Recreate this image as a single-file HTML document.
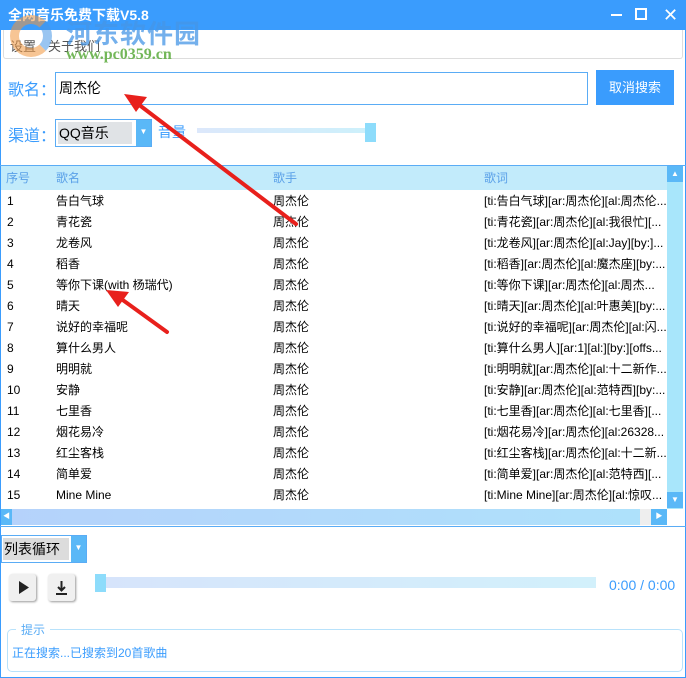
<!DOCTYPE html>
<html><head><meta charset="utf-8"><style>
*{margin:0;padding:0;box-sizing:border-box}
body{width:686px;height:678px;overflow:hidden;background:#fff;font-family:"Liberation Sans","Noto Sans CJK SC",sans-serif;position:relative;font-size:12px;color:#000}
.abs{position:absolute}
.frame{left:0;top:0;width:686px;height:678px;border:1px solid #3a9cfd}
.title{left:0;top:0;width:686px;height:30px;background:#3a9cfd;color:#fff;font-weight:bold;font-size:14px;line-height:30px;padding-left:8px}
.row{left:1px;width:666px;height:21px;line-height:21px;font-size:12px}
.row span{position:absolute;white-space:nowrap}
.c1{left:6px}.c2{left:55px}.c3{left:272px}.c4{left:483px}
</style></head><body>
<div class="abs frame"></div>
<div class="abs title">全网音乐免费下载V5.8</div>
<div class="abs" style="left:611px;top:14px;width:11px;height:2px;background:#fff"></div>
<div class="abs" style="left:635px;top:8px;width:12px;height:12px;border:2px solid #fff"></div>
<div class="abs" style="left:663px;top:4px;color:#fff;font-size:18px;line-height:22px">✕</div>
<div class="abs" style="left:3px;top:30px;width:680px;height:29px;border:1px solid #ddd;border-top:none;border-radius:0 0 3px 3px"></div>
<div class="abs" style="left:10px;top:36px;font-size:13px;color:#555">设置</div>
<div class="abs" style="left:48px;top:36px;font-size:13px;color:#555">关于我们</div>
<!-- watermark -->
<div class="abs" style="left:10px;top:15px;width:42px;height:42px;border-radius:50%;border:9px solid rgba(240,150,60,.55);border-right-color:rgba(70,150,230,.55)"></div>
<div class="abs" style="left:66px;top:14px;font-size:26px;font-weight:bold;color:rgba(70,150,230,.75);letter-spacing:1px">河东软件园</div>
<div class="abs" style="left:66px;top:46px;font-size:16px;font-weight:bold;color:rgba(90,170,60,.85);font-family:'Liberation Serif',serif">www.pc0359.cn</div>

<div class="abs" style="left:8px;top:76px;font-size:16px;color:#3a9cfd">歌名：</div>
<div class="abs" style="left:55px;top:72px;width:533px;height:33px;border:1px solid #5aacf5;padding-left:3px;line-height:31px;font-size:14px">周杰伦</div>
<div class="abs" style="left:596px;top:70px;width:78px;height:35px;background:#3a9cfd;color:#fff;font-size:13px;line-height:35px;text-align:center">取消搜索</div>

<div class="abs" style="left:8px;top:122px;font-size:16px;color:#3a9cfd">渠道：</div>
<div class="abs" style="left:55px;top:119px;width:97px;height:28px;border:1px solid #5aacf5"></div>
<div class="abs" style="left:58px;top:122px;width:74px;height:22px;background:#e0e3e6;font-size:14px;line-height:22px;padding-left:1px">QQ音乐</div>
<div class="abs" style="left:136px;top:120px;width:15px;height:26px;background:#5ab8f7;color:#fff;font-size:8px;text-align:center;line-height:24px">▼</div>
<div class="abs" style="left:158px;top:122px;font-size:14px;color:#3a9cfd">音量</div>
<div class="abs" style="left:197px;top:128px;width:170px;height:5px;background:linear-gradient(90deg,#dce8fb,#cdf0fb)"></div>
<div class="abs" style="left:365px;top:123px;width:11px;height:19px;background:#8ddcfb"></div>

<div class="abs" style="left:0;top:165px;width:686px;height:362px;border:1px solid #5aacf5;border-left:none;border-right:none"></div>
<div class="abs" style="left:1px;top:166px;width:666px;height:24px;background:#c2ebfb;color:#5aa0e8;font-size:12px;line-height:24px">
<span class="abs" style="left:5px">序号</span><span class="abs" style="left:55px">歌名</span><span class="abs" style="left:272px">歌手</span><span class="abs" style="left:483px">歌词</span></div>
<div class="abs" style="left:667px;top:166px;width:16px;height:343px;background:#a8e6fb"></div>
<div class="abs" style="left:667px;top:166px;width:16px;height:16px;background:#5ab8f7;color:#fff;font-size:8px;text-align:center;line-height:16px">▲</div>
<div class="abs" style="left:667px;top:492px;width:16px;height:16px;background:#5ab8f7;color:#fff;font-size:8px;text-align:center;line-height:16px">▼</div>
<div class="abs" style="left:1px;top:509px;width:666px;height:16px;background:linear-gradient(90deg,#b5d2fb,#aee2fb)"></div>
<div class="abs" style="left:1px;top:509px;width:11px;height:16px;background:#5ab8f7;color:#fff;font-size:7px;line-height:16px;text-align:center">◀</div>
<div class="abs" style="left:640px;top:509px;width:11px;height:16px;background:#eee"></div>
<div class="abs" style="left:651px;top:509px;width:16px;height:16px;background:#5ab8f7;color:#fff;font-size:7px;line-height:16px;text-align:center">▶</div>

<div class="abs row" style="top:191px"><span class="c1">1</span><span class="c2">告白气球</span><span class="c3">周杰伦</span><span class="c4">[ti:告白气球][ar:周杰伦][al:周杰伦...</span></div>
<div class="abs row" style="top:212px"><span class="c1">2</span><span class="c2">青花瓷</span><span class="c3">周杰伦</span><span class="c4">[ti:青花瓷][ar:周杰伦][al:我很忙][...</span></div>
<div class="abs row" style="top:233px"><span class="c1">3</span><span class="c2">龙卷风</span><span class="c3">周杰伦</span><span class="c4">[ti:龙卷风][ar:周杰伦][al:Jay][by:]...</span></div>
<div class="abs row" style="top:254px"><span class="c1">4</span><span class="c2">稻香</span><span class="c3">周杰伦</span><span class="c4">[ti:稻香][ar:周杰伦][al:魔杰座][by:...</span></div>
<div class="abs row" style="top:275px"><span class="c1">5</span><span class="c2">等你下课(with 杨瑞代)</span><span class="c3">周杰伦</span><span class="c4">[ti:等你下课][ar:周杰伦][al:周杰...</span></div>
<div class="abs row" style="top:296px"><span class="c1">6</span><span class="c2">晴天</span><span class="c3">周杰伦</span><span class="c4">[ti:晴天][ar:周杰伦][al:叶惠美][by:...</span></div>
<div class="abs row" style="top:317px"><span class="c1">7</span><span class="c2">说好的幸福呢</span><span class="c3">周杰伦</span><span class="c4">[ti:说好的幸福呢][ar:周杰伦][al:闪...</span></div>
<div class="abs row" style="top:338px"><span class="c1">8</span><span class="c2">算什么男人</span><span class="c3">周杰伦</span><span class="c4">[ti:算什么男人][ar:1][al:][by:][offs...</span></div>
<div class="abs row" style="top:359px"><span class="c1">9</span><span class="c2">明明就</span><span class="c3">周杰伦</span><span class="c4">[ti:明明就][ar:周杰伦][al:十二新作...</span></div>
<div class="abs row" style="top:380px"><span class="c1">10</span><span class="c2">安静</span><span class="c3">周杰伦</span><span class="c4">[ti:安静][ar:周杰伦][al:范特西][by:...</span></div>
<div class="abs row" style="top:401px"><span class="c1">11</span><span class="c2">七里香</span><span class="c3">周杰伦</span><span class="c4">[ti:七里香][ar:周杰伦][al:七里香][...</span></div>
<div class="abs row" style="top:422px"><span class="c1">12</span><span class="c2">烟花易冷</span><span class="c3">周杰伦</span><span class="c4">[ti:烟花易冷][ar:周杰伦][al:26328...</span></div>
<div class="abs row" style="top:443px"><span class="c1">13</span><span class="c2">红尘客栈</span><span class="c3">周杰伦</span><span class="c4">[ti:红尘客栈][ar:周杰伦][al:十二新...</span></div>
<div class="abs row" style="top:464px"><span class="c1">14</span><span class="c2">简单爱</span><span class="c3">周杰伦</span><span class="c4">[ti:简单爱][ar:周杰伦][al:范特西][...</span></div>
<div class="abs row" style="top:485px"><span class="c1">15</span><span class="c2">Mine Mine</span><span class="c3">周杰伦</span><span class="c4">[ti:Mine Mine][ar:周杰伦][al:惊叹...</span></div>

<div class="abs" style="left:1px;top:535px;width:86px;height:28px;border:1px solid #5aacf5"></div>
<div class="abs" style="left:3px;top:538px;width:66px;height:22px;background:#dcdcdc;font-size:14px;line-height:22px;padding-left:1px">列表循环</div>
<div class="abs" style="left:71px;top:536px;width:15px;height:26px;background:#5ab8f7;color:#fff;font-size:8px;text-align:center;line-height:24px">▼</div>

<div class="abs" style="left:9px;top:574px;width:27px;height:27px;background:#f0f0f0;border-radius:3px;box-shadow:1px 1px 2px #999"></div>
<svg class="abs" style="left:9px;top:574px" width="27" height="27"><path d="M10 7 L20 13.5 L10 20Z" fill="#222"/></svg>
<div class="abs" style="left:48px;top:574px;width:27px;height:27px;background:#f0f0f0;border-radius:3px;box-shadow:1px 1px 2px #999"></div>
<svg class="abs" style="left:48px;top:574px" width="27" height="27"><path d="M13.5 7v9M10 13l3.5 3.5L17 13" stroke="#222" stroke-width="2" fill="none"/><rect x="8" y="19" width="11" height="2" fill="#222"/></svg>
<div class="abs" style="left:96px;top:577px;width:500px;height:11px;background:linear-gradient(90deg,#d6e4fb,#d2f0fb)"></div>
<div class="abs" style="left:95px;top:574px;width:11px;height:18px;background:#8ddcfb"></div>
<div class="abs" style="left:609px;top:577px;font-size:14px;color:#3a9cfd">0:00 / 0:00</div>

<div class="abs" style="left:7px;top:629px;width:676px;height:43px;border:1px solid #b8e2fb;border-radius:5px"></div>
<div class="abs" style="left:16px;top:621px;background:#fff;padding:0 5px;font-size:12px;color:#5aacf5">提示</div>
<div class="abs" style="left:12px;top:644px;font-size:12px;color:#3a9cfd">正在搜索...已搜索到20首歌曲</div>

<svg class="abs" style="left:0;top:0" width="686" height="678">
<g stroke="#e8201c" stroke-width="4" stroke-linecap="round" fill="#e8201c">
<line x1="296" y1="224" x2="138" y2="104"/>
<line x1="167" y1="332" x2="120" y2="298"/>
</g>
<path d="M124 94 L147 97 L136 112Z" fill="#e8201c"/>
<path d="M106 290 L129 292 L118 307Z" fill="#e8201c"/>
</svg>
</body></html>
